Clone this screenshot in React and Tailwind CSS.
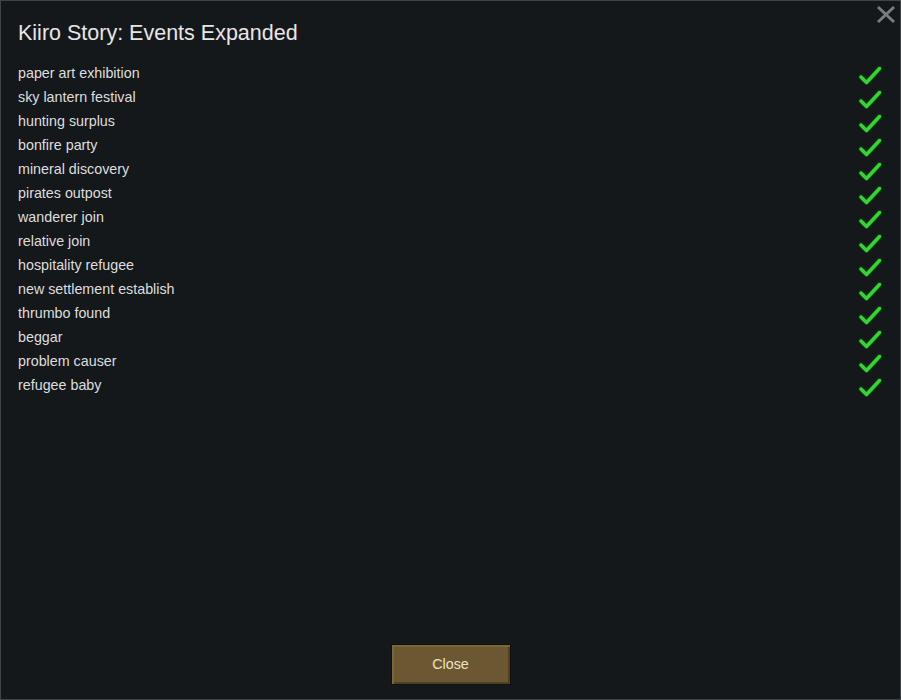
import React from 'react';

const events = [
  'paper art exhibition',
  'sky lantern festival',
  'hunting surplus',
  'bonfire party',
  'mineral discovery',
  'pirates outpost',
  'wanderer join',
  'relative join',
  'hospitality refugee',
  'new settlement establish',
  'thrumbo found',
  'beggar',
  'problem causer',
  'refugee baby',
];

const Check = () => (
  <svg width="24" height="22" viewBox="0 0 24 22">
    <path d="M3 13 L8.5 18.5 L21.5 4.5" fill="none" stroke="#0b3a0b" strokeWidth="5.5" strokeLinecap="round" strokeLinejoin="round" />
    <path d="M3 13 L8.5 18.5 L21.5 4.5" fill="none" stroke="#33d433" strokeWidth="3.5" strokeLinecap="round" strokeLinejoin="round" />
  </svg>
);

export default function App() {
  return (
    <div
      className="w-[901px] h-[700px] bg-[#15181b] border border-[#3f444a] relative flex flex-col text-[#dedede]"
      style={{ fontFamily: '"Liberation Sans", Arial, sans-serif' }}
    >
      {/* close X */}
      <svg className="absolute right-[4px] top-[4px]" width="20" height="19" viewBox="0 0 20 19">
        <path d="M2 2 L18 17 M18 2 L2 17" stroke="#7c7c7c" strokeWidth="3" />
      </svg>

      <h1 className="pl-[17px] pt-[20px] text-[21.5px] leading-[24px] text-[#e6e6e6]">Kiiro Story: Events Expanded</h1>

      <div className="mt-[16px] flex flex-col">
        {events.map((e) => (
          <div key={e} className="h-[24px] flex items-center justify-between pl-[17px] pr-[18px]">
            <span className="text-[14.3px] leading-[24px]">{e}</span>
            <span className="mt-[3px]"><Check /></span>
          </div>
        ))}
      </div>

      <div className="mt-auto mb-[14px] flex justify-center">
        <button className="w-[120px] h-[41px] bg-[#6c5830] border border-[#111] shadow-[inset_2px_2px_0_#7d6739,inset_-2px_-2px_0_#4f4022] text-[14.3px] text-[#ece2c8]">
          Close
        </button>
      </div>
    </div>
  );
}
